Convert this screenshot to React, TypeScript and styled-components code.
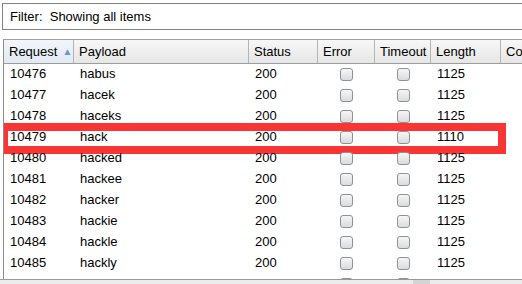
import styled, { createGlobalStyle } from 'styled-components';

const GlobalStyle = createGlobalStyle`
  html, body {
    margin: 0;
    padding: 0;
    background: #ffffff;
  }
  body {
    font-family: "Liberation Sans", Arial, sans-serif;
    font-size: 13px;
    color: #000;
  }
`;

const COLUMNS = '70px 175px 69px 57px 56px 70px 40px';

const Page = styled.div`
  width: 522px;
  height: 284px;
  overflow: hidden;
  display: flex;
  flex-direction: column;
`;

const FilterBar = styled.div`
  margin: 3px -10px 0 2px;
  height: 26px;
  border: 1px solid #828282;
  display: flex;
  align-items: center;
  padding-left: 7px;
`;

const Table = styled.div`
  margin: 9px -10px 0 3px;
  border-left: 1px solid #8c8c8c;
  border-top: 1px solid #a0a0a0;
  display: flex;
  flex-direction: column;
`;

const HeaderRow = styled.div`
  display: grid;
  grid-template-columns: ${COLUMNS};
  height: 23px;
  border-bottom: 1px solid #9c9c9c;
`;

const HeaderCell = styled.div<{ $sorted?: boolean }>`
  display: flex;
  align-items: center;
  padding-left: 5px;
  border-right: 1px solid #b4b4b4;
  background: ${({ $sorted }) =>
    $sorted
      ? 'linear-gradient(#f2f6fb, #e1e9f3)'
      : 'linear-gradient(#f7f7f7, #e6e6e6)'};
  white-space: nowrap;
  overflow: hidden;
`;

const SortArrow = styled.span`
  margin-left: 5px;
  font-size: 10px;
  color: #6f93c2;
`;

const Body = styled.div`
  height: 215px;
  overflow: hidden;
`;

const Row = styled.div<{ $marked?: boolean }>`
  position: relative;
  display: grid;
  grid-template-columns: ${COLUMNS};
  height: 21px;

  ${({ $marked }) =>
    $marked &&
    `
    &::after {
      content: '';
      position: absolute;
      left: -4px;
      top: -4px;
      width: 506px;
      height: 31px;
      box-sizing: border-box;
      border: 8px solid #fb3434;
      pointer-events: none;
    }
  `}
`;

const Cell = styled.div<{ $center?: boolean }>`
  display: flex;
  align-items: center;
  justify-content: ${({ $center }) => ($center ? 'center' : 'flex-start')};
  padding-left: ${({ $center }) => ($center ? '0' : '6px')};
  padding-bottom: 3px;
  white-space: nowrap;
`;

const Check = styled.span`
  display: block;
  width: 13px;
  height: 13px;
  box-sizing: border-box;
  border: 1px solid #8e9196;
  border-radius: 3px;
  background: linear-gradient(#f6f6f6, #d9dbde);
  margin-top: 2px;
`;

const ScrollBar = styled.div`
  position: relative;
  height: 4px;
  border-top: 1px solid #9a9a9a;
  background: #ececec;
  margin: 0 -10px 0 0;
`;

const Thumb = styled.div`
  position: absolute;
  left: 413px;
  top: 0;
  width: 17px;
  height: 100%;
  background: #d4d4d4;
`;

type Item = { id: number; payload: string; status: number; length: number };

const items: Item[] = [
  { id: 10476, payload: 'habus', status: 200, length: 1125 },
  { id: 10477, payload: 'hacek', status: 200, length: 1125 },
  { id: 10478, payload: 'haceks', status: 200, length: 1125 },
  { id: 10479, payload: 'hack', status: 200, length: 1110 },
  { id: 10480, payload: 'hacked', status: 200, length: 1125 },
  { id: 10481, payload: 'hackee', status: 200, length: 1125 },
  { id: 10482, payload: 'hacker', status: 200, length: 1125 },
  { id: 10483, payload: 'hackie', status: 200, length: 1125 },
  { id: 10484, payload: 'hackle', status: 200, length: 1125 },
  { id: 10485, payload: 'hackly', status: 200, length: 1125 },
  { id: 10486, payload: 'hacks', status: 200, length: 1125 },
];

const App = () => (
  <Page>
    <GlobalStyle />
    <FilterBar>Filter:&nbsp; Showing all items</FilterBar>
    <Table>
      <HeaderRow>
        <HeaderCell $sorted>
          Request<SortArrow>&#9650;</SortArrow>
        </HeaderCell>
        <HeaderCell>Payload</HeaderCell>
        <HeaderCell>Status</HeaderCell>
        <HeaderCell>Error</HeaderCell>
        <HeaderCell>Timeout</HeaderCell>
        <HeaderCell>Length</HeaderCell>
        <HeaderCell>Comment</HeaderCell>
      </HeaderRow>
      <Body>
        {items.map((item) => (
          <Row key={item.id} $marked={item.id === 10479}>
            <Cell>{item.id}</Cell>
            <Cell>{item.payload}</Cell>
            <Cell>{item.status}</Cell>
            <Cell $center><Check /></Cell>
            <Cell $center><Check /></Cell>
            <Cell>{item.length}</Cell>
            <Cell />
          </Row>
        ))}
      </Body>
    </Table>
    <ScrollBar>
      <Thumb />
    </ScrollBar>
  </Page>
);

export default App;
